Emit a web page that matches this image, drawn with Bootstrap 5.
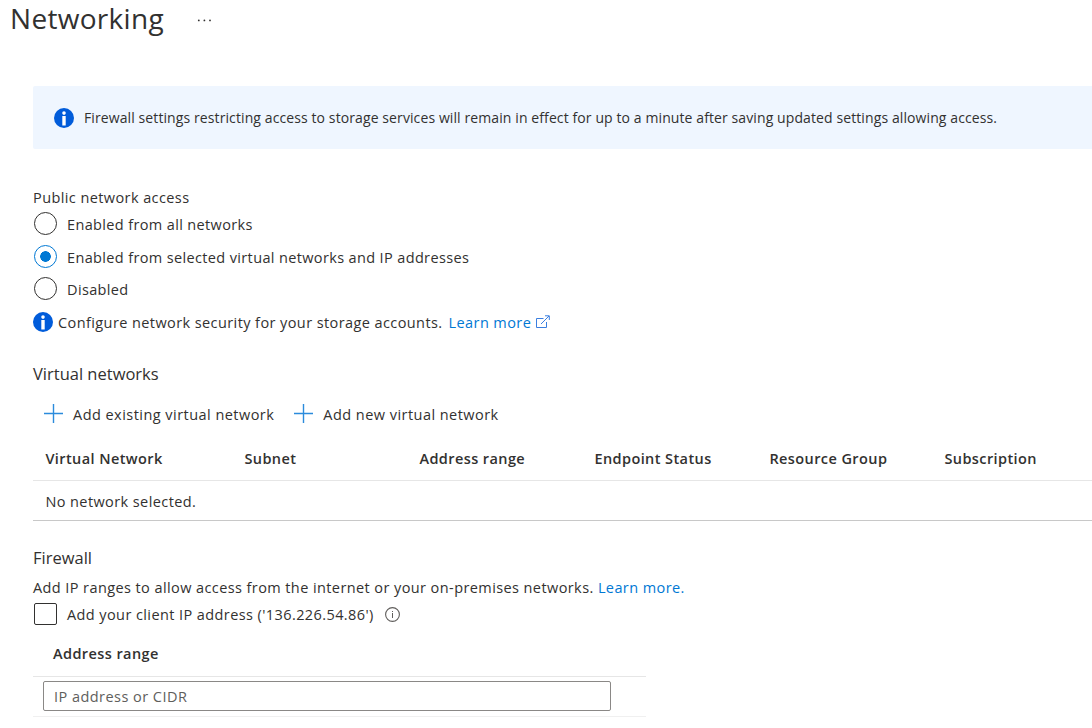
<!DOCTYPE html>
<html lang="en">
<head>
<meta charset="utf-8">
<meta name="viewport" content="width=device-width, initial-scale=1">
<title>Networking</title>
<link href="https://cdn.jsdelivr.net/npm/bootstrap@5.3.0/dist/css/bootstrap.min.css" rel="stylesheet">
<style>
  body { font-family: "Segoe UI", "Open Sans", "Noto Sans", sans-serif; font-size: 14.5px; line-height: 20px; letter-spacing: .41px; color: #323130; background: #fff; overflow: hidden; }
  .page-title { font-size: 28px; height: 38px; padding-left: 10px; gap: 33px; letter-spacing: .3px; }
  .page-title h1 { font-size: inherit; line-height: 36px; font-weight: 400; padding-bottom: 2px; }
  .page-title svg { margin-top: 2px; }
  .blade { margin-left: 33px; }
  .notice { height: 63px; margin-top: 48px; padding-left: 21px; gap: 10px; background: #eff6ff; border-radius: 2px 0 0 2px; font-size: 14px; letter-spacing: .1px; }
  .access { margin-top: 39px; }
  .access-label { margin-bottom: -1px; }
  .choice { height: 32.5px; }
  label.choice { height: 33px; letter-spacing: .36px; }
  label.choice:nth-of-type(2) { height: 32px; }
  .choice span { padding-top: 3px; }
  .hint { margin-top: .5px; }
  .hint span { margin-left: 5px; }
  .hint a { margin-left: 6px; padding-top: 3px; gap: 5px; }
  .hint a svg { margin-top: -3px; }
  .form-check-input.pick { width: 23px; height: 23px; margin: 0 10px 0 1px; border: 1px solid #323130; box-shadow: none; background-color: #fff; }
  .form-check-input.pick[type=checkbox] { border-radius: 2px; height: 22px; }
  .form-check-input.pick[type=radio]:checked { border-color: #0078d4; background-color: #fff; background-image: radial-gradient(circle, #0078d4 5px, transparent 5.6px); }
  a { color: #0078d4; text-decoration: none; }
  .section-title { font-size: 16.5px; line-height: 22px; font-weight: 400; margin: 25px 0 0; letter-spacing: 0; }
  .firewall .section-title { margin-top: 26px; }
  .commands { padding-left: 11px; margin-top: 18px; gap: 20px; letter-spacing: .46px; }
  .command { border: 0; background: none; padding: 0; height: 20px; color: inherit; gap: 10px; letter-spacing: inherit; }
  .command span { padding-top: 3px; }
  .grid-table { width: 1074px; margin: 13px 0 0; table-layout: fixed; border-collapse: separate; border-spacing: 0; }
  .grid-table th { font-weight: 600; height: 45px; padding: 1px 0 0 12.4px; border-bottom: 1px solid #e6e6e6; vertical-align: middle; }
  .grid-table td { height: 40px; padding: 3px 0 0 12.4px; border-bottom: 1px solid #c8c8c8; vertical-align: middle; }
  .explain { margin-top: 9px; }
  .client { margin-top: 5px; }
  .client span { padding-top: 1px; }
  .client svg { margin-left: 11px; }
  .ranges { width: 613px; margin-top: 18px; }
  .ranges-head { font-weight: 600; padding: 1px 0 0 20px; height: 34px; border-bottom: 1px solid #e6e6e6; }
  .ranges-row { padding: 4px 0 5px 10px; border-bottom: 1px solid #f0f0f0; }
  .range-input { width: 568px; height: 30px; border: 1px solid #8a8886; border-radius: 2px; padding: 0 10px; font-size: inherit; letter-spacing: .46px; color: #323130; }
  .range-input::placeholder { color: #605e5c; opacity: 1; }
</style>
</head>
<body>
<header class="page-title d-flex align-items-center">
  <h1 class="mb-0">Networking</h1>
  <svg width="16" height="4" viewBox="0 0 16 4" fill="#323130"><circle cx="1.8" cy="2.4" r=".9"/><circle cx="7.4" cy="2.4" r=".9"/><circle cx="13" cy="2.4" r=".9"/></svg>
</header>
<main class="blade">
  <div class="notice d-flex align-items-center">
    <svg width="20" height="20" viewBox="0 0 20 20"><circle cx="10" cy="10" r="10" fill="#015cda"/><circle cx="10" cy="5.1" r="1.8" fill="#fff"/><path d="M8.3 8h3.4v9.5H8.3z" fill="#fff"/></svg>
    <span class="text-nowrap">Firewall settings restricting access to storage services will remain in effect for up to a minute after saving updated settings allowing access.</span>
  </div>

  <section class="access">
    <div class="access-label">Public network access</div>
    <label class="choice d-flex align-items-center"><input class="form-check-input pick" type="radio" name="access"><span>Enabled from all networks</span></label>
    <label class="choice d-flex align-items-center"><input class="form-check-input pick" type="radio" name="access" checked><span>Enabled from selected virtual networks and IP addresses</span></label>
    <label class="choice d-flex align-items-center"><input class="form-check-input pick" type="radio" name="access"><span>Disabled</span></label>
    <div class="choice hint d-flex align-items-center">
      <svg width="20" height="20" viewBox="0 0 20 20"><circle cx="10" cy="10" r="10" fill="#015cda"/><circle cx="10" cy="5.1" r="1.8" fill="#fff"/><path d="M8.3 8h3.4v9.5H8.3z" fill="#fff"/></svg>
      <span>Configure network security for your storage accounts.</span>
      <a href="#" class="d-flex align-items-center">Learn more
        <svg width="14" height="14" viewBox="0 0 14 14" fill="none" stroke="#3b7fe0" stroke-width="1"><path d="M7.5 3.5h-7v9h10V7M5 9l8-8M9 .8h4.3V5"/></svg></a>
    </div>
  </section>

  <section>
    <h2 class="section-title">Virtual networks</h2>
    <div class="commands d-flex">
      <button class="command d-flex align-items-center"><svg width="19" height="19" viewBox="0 0 19 19" stroke="#2b8bdc" stroke-width="1.4"><path d="M9.5 0v19M0 9.5h19"/></svg><span>Add existing virtual network</span></button>
      <button class="command d-flex align-items-center"><svg width="19" height="19" viewBox="0 0 19 19" stroke="#2b8bdc" stroke-width="1.4"><path d="M9.5 0v19M0 9.5h19"/></svg><span>Add new virtual network</span></button>
    </div>
    <table class="grid-table">
      <colgroup><col style="width:199px"><col style="width:175px"><col style="width:175px"><col style="width:175px"><col style="width:175px"><col style="width:175px"></colgroup>
      <thead><tr><th>Virtual Network</th><th>Subnet</th><th>Address range</th><th>Endpoint Status</th><th>Resource Group</th><th>Subscription</th></tr></thead>
      <tbody><tr><td colspan="6">No network selected.</td></tr></tbody>
    </table>
  </section>

  <section class="firewall">
    <h2 class="section-title">Firewall</h2>
    <div class="explain"><span>Add IP ranges to allow access from the internet or your on-premises networks.</span> <a href="#">Learn more.</a></div>
    <label class="client d-flex align-items-center"><input class="form-check-input pick" type="checkbox"><span>Add your client IP address ('136.226.54.86')</span>
      <svg width="15" height="15" viewBox="0 0 15 15"><circle cx="7.5" cy="7.5" r="6.9" fill="none" stroke="#605e5c" stroke-width="1.1"/><path d="M7 6h1v5H7zM7 4h1v1.1H7z" fill="#605e5c"/></svg></label>
    <div class="ranges">
      <div class="ranges-head">Address range</div>
      <div class="ranges-row"><input class="range-input d-block" type="text" placeholder="IP address or CIDR"></div>
    </div>
  </section>
</main>
<script src="https://cdn.jsdelivr.net/npm/bootstrap@5.3.0/dist/js/bootstrap.bundle.min.js"></script>
</body>
</html>
